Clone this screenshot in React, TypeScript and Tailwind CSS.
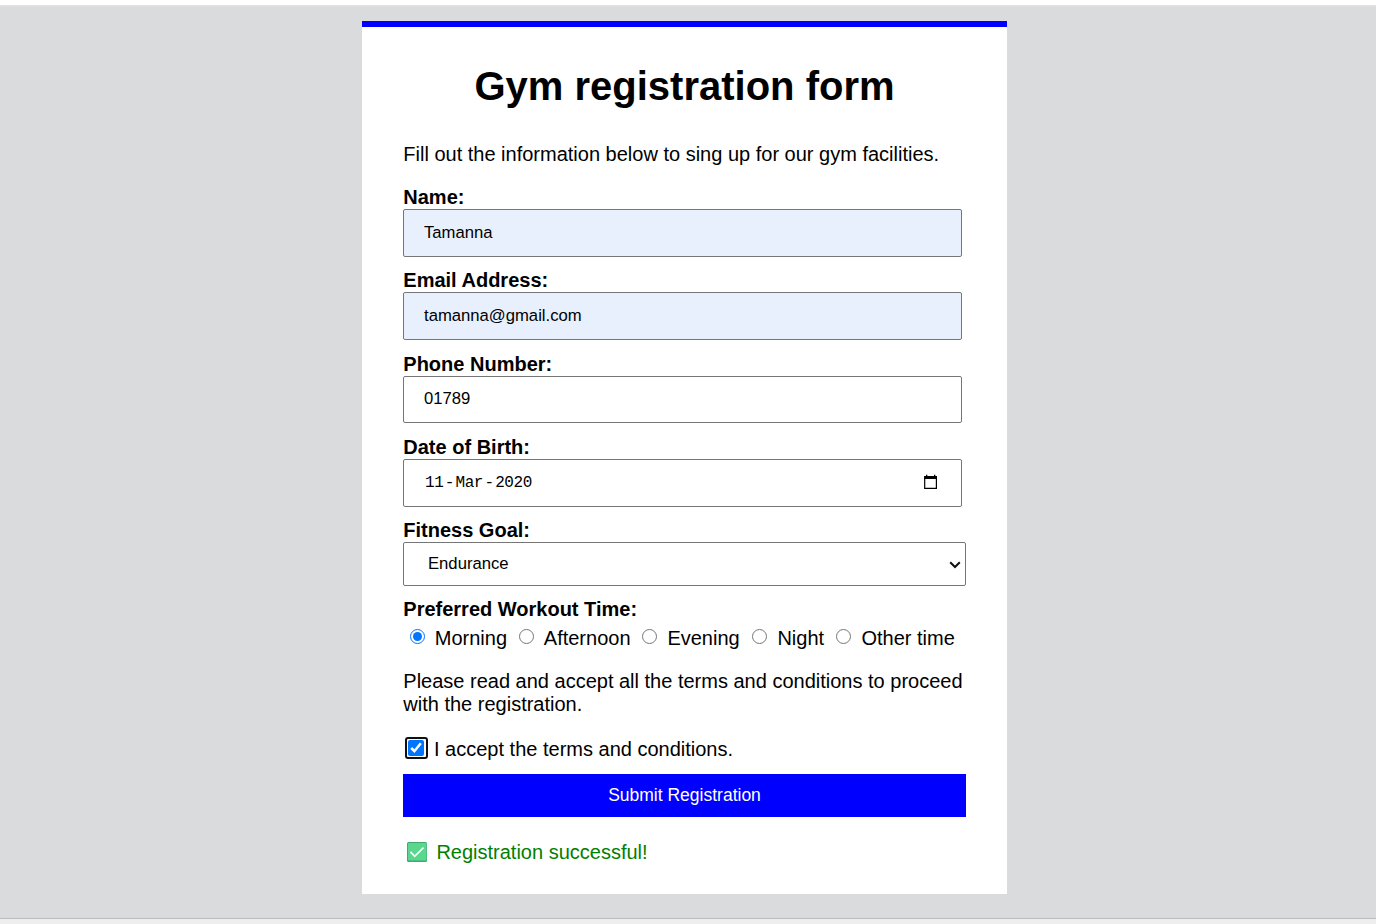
import React from "react";

const field =
  "block w-[559px] rounded-[2px] border border-[#767676] pl-5 pr-5 text-[16.67px] text-black outline-none";

function Label({ htmlFor, children, className = "" }: { htmlFor?: string; children: React.ReactNode; className?: string }) {
  return (
    <label htmlFor={htmlFor} className={`block h-[23px] whitespace-nowrap pl-[0.3px] font-bold leading-[23px] ${className}`}>
      {children}
    </label>
  );
}

const times = [
  { label: "Morning", cell: "w-[109px]" },
  { label: "Afternoon", cell: "w-[123px]" },
  { label: "Evening", cell: "w-[110px]" },
  { label: "Night", cell: "w-[84px]" },
  { label: "Other time", cell: "w-[125px]" },
];

export default function App() {
  return (
    <div className="flex h-[924px] w-[1376px] flex-col overflow-hidden bg-[#dadbdd] font-['Liberation_Sans',Arial,sans-serif] text-[20px] leading-[23px] text-black">
      <div className="h-[7px] shrink-0 border-b-2 border-[#dfe1dc] bg-white" />
      <main className="flex h-[911px] shrink-0 flex-col pl-[362px] pt-[14px]">
        <form className="h-[873px] w-[645px] border-t-[6px] border-[#0000ff] bg-white pl-[41px] pt-[36px]" onSubmit={(e) => e.preventDefault()}>
          <h1 className="h-[46px] w-[563px] whitespace-nowrap text-center text-[40px] font-bold leading-[46px]">
            Gym registration form
          </h1>
          <p className="mt-[34px] h-[23px] whitespace-nowrap pl-[0.3px]">
            Fill out the information below to sing up for our gym facilities.
          </p>

          <Label htmlFor="name" className="mt-5">Name:</Label>
          <input id="name" type="text" defaultValue="Tamanna" className={`${field} h-[48px] bg-[#e8f0fe]`} />

          <Label htmlFor="email" className="mt-3">Email Address:</Label>
          <input id="email" type="text" defaultValue="tamanna@gmail.com" className={`${field} h-[48px] bg-[#e8f0fe]`} />

          <Label htmlFor="phone" className="mt-[13px]">Phone Number:</Label>
          <input id="phone" type="text" defaultValue="01789" className={`${field} h-[47px] bg-white pb-[2px]`} />

          <Label className="mt-[13px]">Date of Birth:</Label>
          <div className={`${field} flex! h-[48px] items-center justify-between`}>
            <span className="flex pl-px font-['Liberation_Mono',monospace] text-[16px] tracking-[-0.43px]">
              <span>11</span>
              <span className="px-[1.5px]">-</span>
              <span>Mar</span>
              <span className="px-[1.5px]">-</span>
              <span>2020</span>
            </span>
            <svg width="16" height="16" viewBox="0 0 16 16" className="mb-[2px] mr-[3px]" fill="none">
              <path d="M2.7 4h11.7v10.4H2.7z" stroke="#000" strokeWidth="1.2" />
              <path d="M2.1 2H15v3H2.1zM4 .8h1.3V2H4zM12 .8h1.3V2H12z" fill="#000" />
            </svg>
          </div>

          <Label className="mt-3">Fitness Goal:</Label>
          <div className="flex h-[44px] w-[563px] items-center justify-between rounded-[2px] border border-[#767676] bg-white pl-6 pr-[4px] text-[16.67px]">
            <span className="pb-[2px]">Endurance</span>
            <svg width="12" height="8" viewBox="0 0 12 8" className="mt-[2px]" fill="none">
              <path d="M1.2 1.2 6 6l4.8-4.8" stroke="#101010" strokeWidth="2" />
            </svg>
          </div>

          <Label className="mt-3">Preferred Workout Time:</Label>
          <div className="mt-[6px] flex h-[23px] pl-[7px]">
            {times.map((t, i) => (
              <label key={t.label} className={`flex shrink-0 whitespace-nowrap ${t.cell}`}>
                <input type="radio" name="time" defaultChecked={i === 0} className={`m-0 mt-[2px] h-[15px] w-[15px] shrink-0 ${i > 1 ? "mr-[10.4px]" : "mr-[9.8px]"}`} />
                {t.label}
              </label>
            ))}
          </div>

          <p className="mt-5 h-[46px] whitespace-nowrap pl-[0.3px]">
            Please read and accept all the terms and conditions to proceed
            <br />
            with the registration.
          </p>

          <label className="mt-[22px] flex h-[23px] items-start whitespace-nowrap">
            <span className="-mt-px mr-[6px] ml-[2px] flex h-[22px] w-[23px] items-start rounded-[3px] border-2 border-[#101010] pl-px pt-px">
              <input type="checkbox" defaultChecked className="m-0 h-[16px] w-[16px]" />
            </span>
            I accept the terms and conditions.
          </label>

          <button type="submit" className="mt-[13px] block h-[43px] w-[563px] bg-[#0000ff] pb-px text-[17.5px] leading-[21px] text-white">
            Submit Registration
          </button>

          <p className="mt-6 flex h-[23px] whitespace-nowrap pl-1 text-[#008000]">
            <svg width="20" height="20" viewBox="0 0 20 20" className="mr-[9.4px] mt-px" fill="none">
              <rect width="20" height="20" rx="1.5" fill="#3faa70" />
              <rect x="1" y="1" width="18.5" height="17.5" rx="1" fill="#5ad68e" />
              <path d="m3.5 9.8 4.2 4.5 8.8-8.6" stroke="#f5fff9" strokeWidth="1.7" />
            </svg>
            Registration successful!
          </p>
        </form>
      </main>
      <footer className="h-[6px] shrink-0 border-t border-[#bbbcbc] bg-[#eeeeee]" />
    </div>
  );
}
